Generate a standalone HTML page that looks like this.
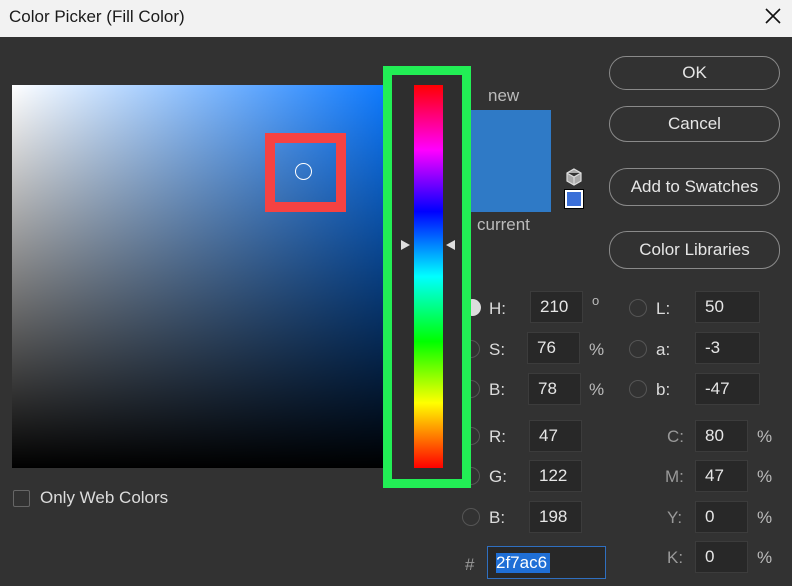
<!DOCTYPE html>
<html><head><meta charset="utf-8"><style>
*{margin:0;padding:0;box-sizing:border-box}
body{width:792px;height:586px;overflow:hidden;background:#323232;font-family:"Liberation Sans","DejaVu Sans",sans-serif;position:relative;color:#d8d8d8}
.abs{position:absolute}
.title{left:0;top:0;width:792px;height:37px;background:#f2f2f2;color:#1a1a1a;font-size:17px;line-height:33px;padding-left:9px}
.field{position:absolute;left:12px;top:85px;width:378px;height:383px;background:linear-gradient(to bottom,rgba(0,0,0,0),#000),linear-gradient(to right,#fff,#0a78ff)}
.btn{position:absolute;left:609px;width:171px;border:1.5px solid #8a8a8a;border-radius:18px;text-align:center;font-size:17px;color:#e6e6e6}
.lbl{position:absolute;font-size:17px;color:#dcdcdc}
.box{position:absolute;height:32px;background:#282828;border:1px solid #3c3c3c;font-size:17px;color:#e6e6e6;padding-left:9px;line-height:30px}
.rad{position:absolute;width:18px;height:18px;border:1.5px solid #555;border-radius:50%}
.pct{position:absolute;font-size:17px;color:#bbb}
</style></head><body>
<div class="abs title">Color Picker (Fill Color)</div>
<svg class="abs" style="left:764px;top:7px" width="18" height="18"><path d="M2 2L16 16M16 2L2 16" stroke="#111" stroke-width="1.6"/></svg>
<div class="field"></div>
<div class="abs" style="left:265px;top:133px;width:81px;height:79px;border:10px solid #f64242"></div>
<div class="abs" style="left:295px;top:163px;width:17px;height:17px;border:1px solid #fff;border-radius:50%"></div>

<div class="abs" style="left:464px;top:299px;width:17px;height:17px;border-radius:50%;background:#ddd"></div>
<div class="rad" style="left:462px;top:340px"></div>
<div class="rad" style="left:462px;top:380px"></div>
<div class="rad" style="left:462px;top:427px"></div>
<div class="rad" style="left:462px;top:467px"></div>
<div class="rad" style="left:462px;top:508px"></div>

<div class="abs" style="left:383px;top:66px;width:88px;height:422px;border:9px solid #22ee55;background:#2e2e2e;z-index:2"></div>
<div class="abs" style="left:414px;top:85px;width:29px;height:383px;z-index:3;background:linear-gradient(to bottom,#ff0000 0%,#ff00ff 17%,#0000ff 33%,#00ffff 50%,#00ff00 67%,#ffff00 83%,#ff0000 100%)"></div>
<svg class="abs" style="left:400px;top:238px;z-index:4" width="60" height="14"><path d="M1 2L10 7L1 12Z" fill="#ddd"/><path d="M55 2L46 7L55 12Z" fill="#ddd"/></svg>
<div class="lbl" style="left:488px;top:86px;color:#bbb">new</div>
<div class="abs" style="left:471px;top:110px;width:80px;height:102px;background:#2f7ac6"></div>
<div class="lbl" style="left:477px;top:215px;color:#bbb">current</div>
<svg class="abs" style="left:564px;top:167px" width="20" height="20"><path d="M10 2L17 6V14L10 18L3 14V6Z M3 6L10 10L17 6 M10 10V18" fill="#aaa" stroke="#ddd" stroke-width="1.2"/></svg>
<div class="abs" style="left:565px;top:190px;width:18px;height:18px;border:2px solid #fff;background:#3a6fd8;outline:1px solid #000"></div>
<div class="btn" style="top:56px;height:34px;line-height:31px">OK</div>
<div class="btn" style="top:106px;height:36px;line-height:33px">Cancel</div>
<div class="btn" style="top:168px;height:38px;line-height:35px">Add to Swatches</div>
<div class="btn" style="top:231px;height:38px;line-height:35px">Color Libraries</div>
<div class="abs" style="left:13px;top:490px;width:17px;height:17px;border:1.5px solid #666;border-radius:2px"></div>
<div class="lbl" style="left:40px;top:488px">Only Web Colors</div>

<div class="lbl" style="left:489px;top:299px">H:</div><div class="box" style="left:530px;top:291px;width:53px">210</div><div class="pct" style="left:592px;top:293px;font-size:13px">o</div>
<div class="lbl" style="left:489px;top:340px">S:</div><div class="box" style="left:527px;top:332px;width:53px">76</div><div class="pct" style="left:589px;top:340px">%</div>
<div class="lbl" style="left:489px;top:380px">B:</div><div class="box" style="left:528px;top:373px;width:53px">78</div><div class="pct" style="left:589px;top:380px">%</div>
<div class="lbl" style="left:489px;top:427px">R:</div><div class="box" style="left:529px;top:420px;width:53px">47</div>
<div class="lbl" style="left:489px;top:467px">G:</div><div class="box" style="left:529px;top:460px;width:53px">122</div>
<div class="lbl" style="left:489px;top:508px">B:</div><div class="box" style="left:529px;top:501px;width:53px">198</div>
<div class="pct" style="left:465px;top:555px;color:#999">#</div>
<div class="abs" style="left:487px;top:546px;width:119px;height:33px;border:1px solid #2f6fc0;background:#282828"></div>
<div class="abs" style="left:496px;top:553px;height:20px;width:54px;background:#1f6fd6;color:#fff;font-size:17px;line-height:20px">2f7ac6</div>

<div class="rad" style="left:629px;top:299px"></div>
<div class="rad" style="left:629px;top:340px"></div>
<div class="rad" style="left:629px;top:380px"></div>
<div class="lbl" style="left:656px;top:299px">L:</div><div class="box" style="left:695px;top:291px;width:65px">50</div>
<div class="lbl" style="left:656px;top:340px">a:</div><div class="box" style="left:695px;top:332px;width:65px">-3</div>
<div class="lbl" style="left:656px;top:380px">b:</div><div class="box" style="left:695px;top:373px;width:65px">-47</div>
<div class="lbl" style="left:667px;top:427px;color:#999">C:</div><div class="box" style="left:695px;top:420px;width:53px">80</div><div class="pct" style="left:757px;top:427px">%</div>
<div class="lbl" style="left:665px;top:467px;color:#999">M:</div><div class="box" style="left:695px;top:460px;width:53px">47</div><div class="pct" style="left:757px;top:467px">%</div>
<div class="lbl" style="left:667px;top:508px;color:#999">Y:</div><div class="box" style="left:695px;top:501px;width:53px">0</div><div class="pct" style="left:757px;top:508px">%</div>
<div class="lbl" style="left:667px;top:548px;color:#999">K:</div><div class="box" style="left:695px;top:541px;width:53px">0</div><div class="pct" style="left:757px;top:548px">%</div>
</body></html>
